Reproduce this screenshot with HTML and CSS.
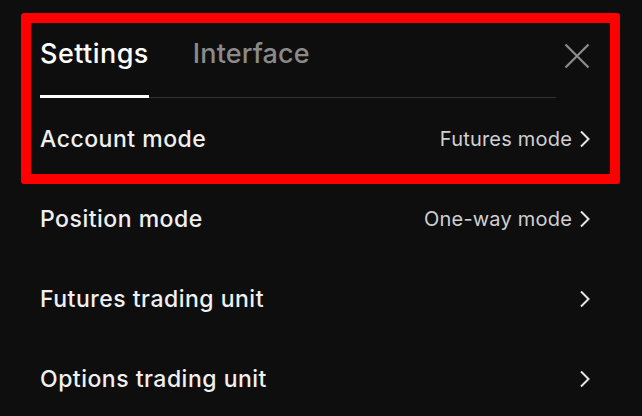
FILE: index.html
```html
<!DOCTYPE html>
<html lang="en">
<head>
<meta charset="utf-8">
<title>Settings</title>
<link rel="stylesheet" href="styles.css">
</head>
<body>
<div class="panel">
  <div class="header">
    <div class="tabs">
      <div class="tab active">Settings</div>
      <div class="tab">Interface</div>
    </div>
    <button class="close" aria-label="Close">
      <svg width="26" height="26" viewBox="0 0 26 26"><path d="M1.5 1.5 L24.5 24.5 M24.5 1.5 L1.5 24.5" stroke="#8c8c8c" stroke-width="2.2" fill="none"/></svg>
    </button>
  </div>
  <div class="rows">
    <div class="row"><span class="label">Account mode</span><span class="value">Futures mode<svg class="chev" viewBox="0 0 12 18"><path d="M2 1.5 L9.5 9 L2 16.5" stroke="#e6e6e6" stroke-width="2" fill="none"/></svg></span></div>
    <div class="row"><span class="label">Position mode</span><span class="value">One-way mode<svg class="chev" viewBox="0 0 12 18"><path d="M2 1.5 L9.5 9 L2 16.5" stroke="#e6e6e6" stroke-width="2" fill="none"/></svg></span></div>
    <div class="row"><span class="label">Futures trading unit</span><span class="value"><svg class="chev" viewBox="0 0 12 18"><path d="M2 1.5 L9.5 9 L2 16.5" stroke="#e6e6e6" stroke-width="2" fill="none"/></svg></span></div>
    <div class="row"><span class="label">Options trading unit</span><span class="value"><svg class="chev" viewBox="0 0 12 18"><path d="M2 1.5 L9.5 9 L2 16.5" stroke="#e6e6e6" stroke-width="2" fill="none"/></svg></span></div>
  </div>
  <div class="highlight"></div>
</div>
</body>
</html>
```
FILE: styles.css
```css
html, body {
  margin: 0;
  padding: 0;
  background: #0e0e0e;
  height: 100%;
  overflow: hidden;
}
body {
  font-family: Inter, "Liberation Sans", sans-serif;
  color: #f2f2f2;
}
.panel {
  position: relative;
  padding: 38px 0 0 40px;
}
.header {
  display: flex;
  align-items: flex-start;
  padding-right: 52px;
}
.tabs {
  flex: 1;
  display: flex;
  gap: 44px;
  border-bottom: 1px solid #333333;
}
.tab {
  font-size: 27px;
  line-height: 32px;
  font-weight: 500;
  letter-spacing: 0.45px;
  color: #8a8a8a;
  padding-bottom: 25px;
  border-bottom: 3px solid transparent;
  margin-bottom: -1px;
}
.tab + .tab {
  letter-spacing: 0.1px;
}
.tab.active {
  color: #ffffff;
  border-bottom-color: #ffffff;
}
.close {
  background: none;
  border: 0;
  padding: 0;
  margin: 5px 0 0 8px;
  width: 26px;
  height: 26px;
  display: block;
}
.close svg { display: block; }
.rows {
  display: flex;
  flex-direction: column;
  padding-right: 51px;
}
.row {
  height: 80px;
  display: flex;
  align-items: center;
  justify-content: space-between;
}
.label {
  font-size: 23px;
  font-weight: 500;
  letter-spacing: 0.5px;
  color: #f0f0f0;
  padding-top: 2px;
}
.value {
  display: flex;
  align-items: center;
  gap: 7px;
  font-size: 20px;
  letter-spacing: 0.2px;
  color: #d0d0d0;
  padding-top: 2px;
}
.chev {
  width: 12px;
  height: 18px;
  display: block;
}
.highlight {
  position: absolute;
  left: 21px;
  top: 13px;
  width: 579px;
  height: 151px;
  border: 10px solid #ff0000;
  border-radius: 3px;
  pointer-events: none;
}
```
